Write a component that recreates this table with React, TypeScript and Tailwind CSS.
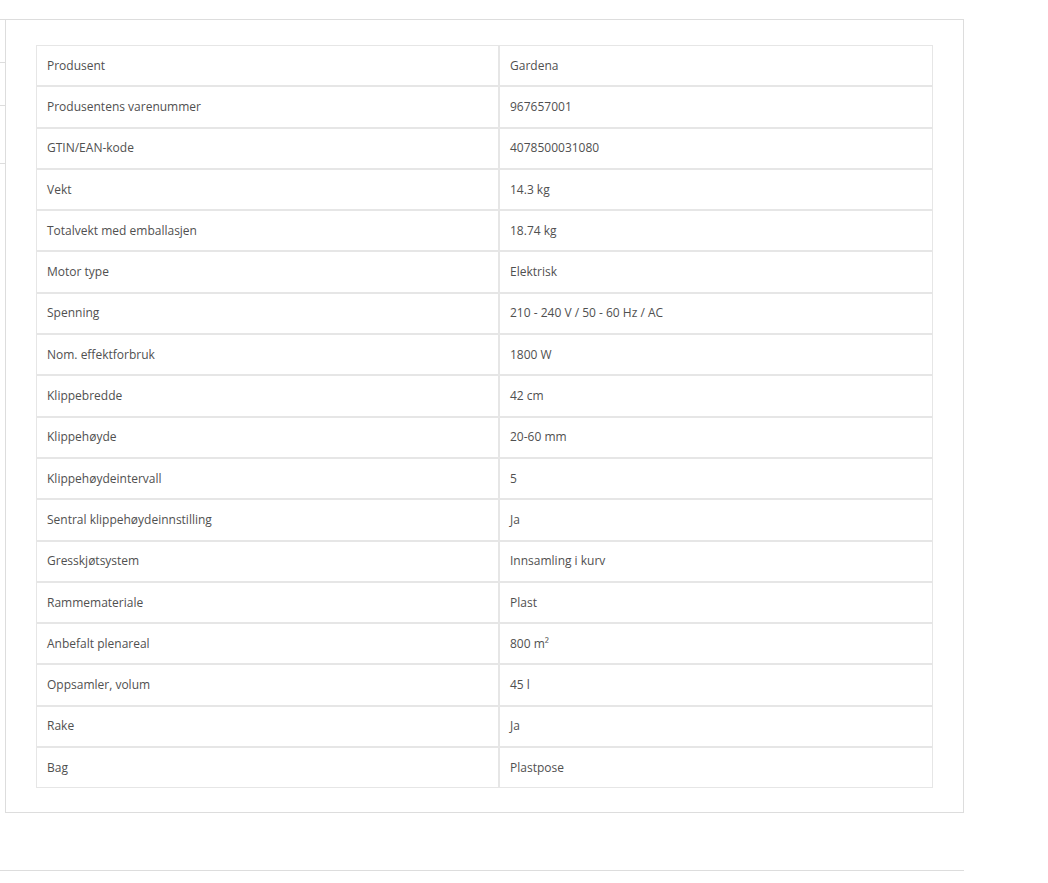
import React from 'react';

const specs: [string, React.ReactNode][] = [
  ['Produsent', 'Gardena'],
  ['Produsentens varenummer', '967657001'],
  ['GTIN/EAN-kode', '4078500031080'],
  ['Vekt', '14.3 kg'],
  ['Totalvekt med emballasjen', '18.74 kg'],
  ['Motor type', 'Elektrisk'],
  ['Spenning', '210 - 240 V / 50 - 60 Hz / AC'],
  ['Nom. effektforbruk', '1800 W'],
  ['Klippebredde', '42 cm'],
  ['Klippehøyde', '20-60 mm'],
  ['Klippehøydeintervall', '5'],
  ['Sentral klippehøydeinnstilling', 'Ja'],
  ['Gresskjøtsystem', 'Innsamling i kurv'],
  ['Rammemateriale', 'Plast'],
  ['Anbefalt plenareal', '800 m²'],
  ['Oppsamler, volum', '45 l'],
  ['Rake', 'Ja'],
  ['Bag', 'Plastpose'],
];

export default function App() {
  return (
    <div className="min-h-screen bg-white pt-[19px] text-[12px] text-[#505050]" style={{ fontFamily: '"Open Sans", sans-serif' }}>
      <div className="w-[964px] border-t border-[#ddd]">
        <div className="flex">
          {/* hidden sidebar edge */}
          <div className="w-[5px] shrink-0">
            <div className="h-[43px] border-b border-[#ddd]" />
            <div className="h-[43px] border-b border-[#ddd]" />
            <div className="h-[58px] border-b border-[#ddd]" />
          </div>
          <div className="flex-1 border-x border-b border-[#ddd] pt-[25px] pb-[24px] px-[30px]">
            <div className="grid grid-cols-[463px_1fr]">
              {specs.map(([label, value]) => (
                <React.Fragment key={label}>
                  <div className="h-[41.3px] border border-[#e6e6e6] flex items-center px-[10px]">{label}</div>
                  <div className="h-[41.3px] border border-[#e6e6e6] flex items-center px-[10px]">{value}</div>
                </React.Fragment>
              ))}
            </div>
          </div>
        </div>
      </div>
      <div className="h-[57px]" />
      <div className="w-[964px] border-t border-[#ddd]" />
    </div>
  );
}
